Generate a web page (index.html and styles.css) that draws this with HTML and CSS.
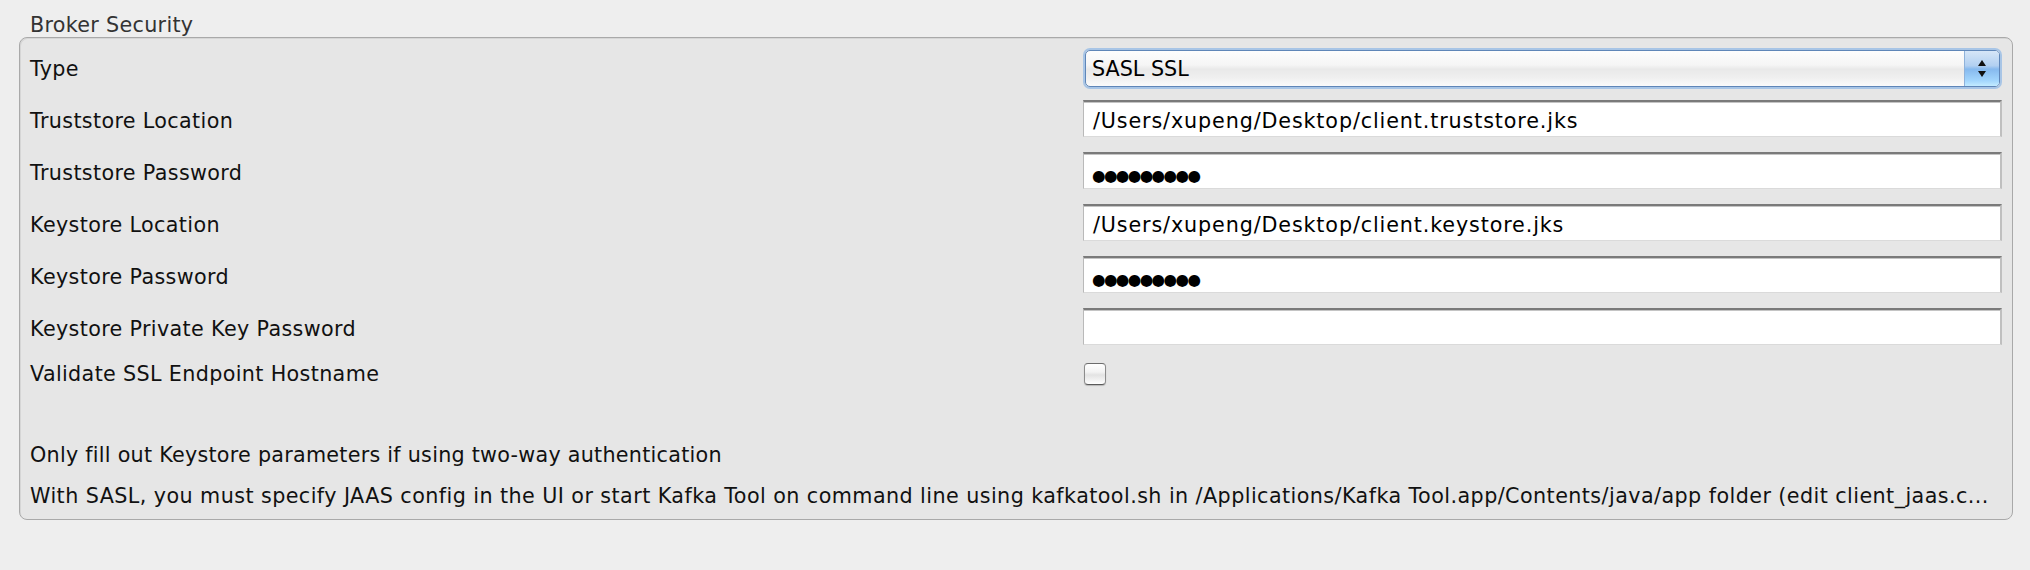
FILE: index.html
```html
<!DOCTYPE html>
<html lang="en">
<head>
<meta charset="utf-8">
<title>Broker Security</title>
<link rel="stylesheet" href="styles.css">
</head>
<body>
<div class="group">
  <div class="group-title">Broker Security</div>
  <div class="panel">
    <div class="form">
      <div class="row row-select">
        <span class="label">Type</span>
        <div class="select">
          <span class="select-value">SASL SSL</span>
          <span class="select-button">
            <svg width="10" height="20" viewBox="0 0 10 20" aria-hidden="true">
              <path d="M5 1 L9 7 L1 7 Z" fill="#111"/>
              <path d="M1 12 L9 12 L5 18 Z" fill="#111"/>
            </svg>
          </span>
        </div>
      </div>
      <div class="row row-input">
        <span class="label">Truststore Location</span>
        <div class="field">/Users/xupeng/Desktop/client.truststore.jks</div>
      </div>
      <div class="row row-input">
        <span class="label">Truststore Password</span>
        <div class="field"><span class="dots">●●●●●●●●●</span></div>
      </div>
      <div class="row row-input">
        <span class="label">Keystore Location</span>
        <div class="field">/Users/xupeng/Desktop/client.keystore.jks</div>
      </div>
      <div class="row row-input">
        <span class="label">Keystore Password</span>
        <div class="field"><span class="dots">●●●●●●●●●</span></div>
      </div>
      <div class="row row-input">
        <span class="label">Keystore Private Key Password</span>
        <div class="field"></div>
      </div>
      <div class="row row-check">
        <span class="label">Validate SSL Endpoint Hostname</span>
        <div class="check-cell"><span class="checkbox"></span></div>
      </div>
    </div>
    <div class="notes">
      <p class="note note-short">Only fill out Keystore parameters if using two-way authentication</p>
      <p class="note note-long">With SASL, you must specify JAAS config in the UI or start Kafka Tool on command line using kafkatool.sh in /Applications/Kafka Tool.app/Contents/java/app folder (edit client_jaas.c...</p>
    </div>
  </div>
</div>
</body>
</html>
```

FILE: styles.css
```css
html, body {
  margin: 0;
  padding: 0;
}

body {
  width: 2030px;
  height: 570px;
  background: #eeeeee;
  font-family: "DejaVu Sans", "Liberation Sans", sans-serif;
  font-size: 20.7px;
  color: #111;
  overflow: hidden;
}

.group {
  padding: 13px 17px 0 19px;
}

.group-title {
  height: 24px;
  line-height: 24px;
  padding-left: 11px;
  color: #333;
  letter-spacing: 0.3px;
  white-space: nowrap;
}

.panel {
  border: 1px solid #a9a9a9;
  border-radius: 8px;
  background: #e6e6e6;
  padding: 10px 10px 9px 10px;
  box-shadow: inset 1px 1px 0 #d6d6d6;
}

.form {
  display: flex;
  flex-direction: column;
}

.row {
  display: grid;
  grid-template-columns: 1fr 919px;
  align-items: start;
}

.label {
  line-height: 24px;
  white-space: nowrap;
  letter-spacing: 0.35px;
}

.row-select .label,
.row-input .label {
  padding-top: 9px;
}

.row-select {
  height: 41px;
}

.row-input {
  margin-top: 15px;
}

.row-select + .row-input {
  margin-top: 11px;
}

.select {
  display: flex;
  height: 37px;
  margin: 2px;
  box-sizing: border-box;
  border: 1px solid #5f86b8;
  border-radius: 5px;
  box-shadow: 0 0 0 2px #a8c5e6;
  background: linear-gradient(#fdfdfd 0%, #f5f5f5 40%, #e9e9e9 52%, #efefef 75%, #fbfbfb 100%);
  overflow: hidden;
}

.select-value {
  flex: 1;
  padding: 6px 0 0 6px;
  line-height: 24px;
  color: #000;
}

.select-button {
  width: 34px;
  display: flex;
  align-items: center;
  justify-content: center;
  border-left: 1px solid #8fb2da;
  background: linear-gradient(#d6e6f7 0%, #b2d0f1 42%, #86b9ee 52%, #a3d6fd 85%, #c3ebff 100%);
}

.field {
  height: 37px;
  box-sizing: border-box;
  background: #fff;
  border-top: 2px solid #7a7a7a;
  border-left: 1px solid #b9b9b9;
  border-right: 2px solid #bfbfbf;
  border-bottom: 1px solid #dadada;
  box-shadow: inset 0 1px 0 #c4c4c4;
  padding: 7px 0 0 9px;
  line-height: 24px;
  color: #000;
  letter-spacing: 0.87px;
  white-space: nowrap;
  overflow: hidden;
}

.dots {
  display: inline-block;
  font-size: 15.5px;
  letter-spacing: -1.6px;
  line-height: 24px;
  position: relative;
  top: 1px;
  margin-left: -1px;
}

.row-check {
  margin-top: 17px;
  height: 24px;
  align-items: center;
}

.check-cell {
  display: flex;
  align-items: center;
  height: 24px;
}

.checkbox {
  display: block;
  width: 22px;
  height: 22px;
  margin-left: 1px;
  box-sizing: border-box;
  border: 1px solid #8c8c8c;
  border-top-color: #6c6c6c;
  border-bottom-color: #5a5a5a;
  border-radius: 4px;
  background: linear-gradient(#ffffff 0%, #f3f3f3 40%, #e3e3e3 55%, #f5f5f5 85%, #ffffff 100%);
  box-shadow: 0 1px 1px rgba(0, 0, 0, 0.2);
}

.notes {
  margin-top: 55px;
  display: flex;
  flex-direction: column;
  gap: 13px;
}

.note {
  margin: 0;
  line-height: 28px;
  white-space: nowrap;
  overflow: hidden;
  color: #111;
}

.note-short {
  letter-spacing: 0.26px;
}

.note-long {
  letter-spacing: 0.43px;
}
```
